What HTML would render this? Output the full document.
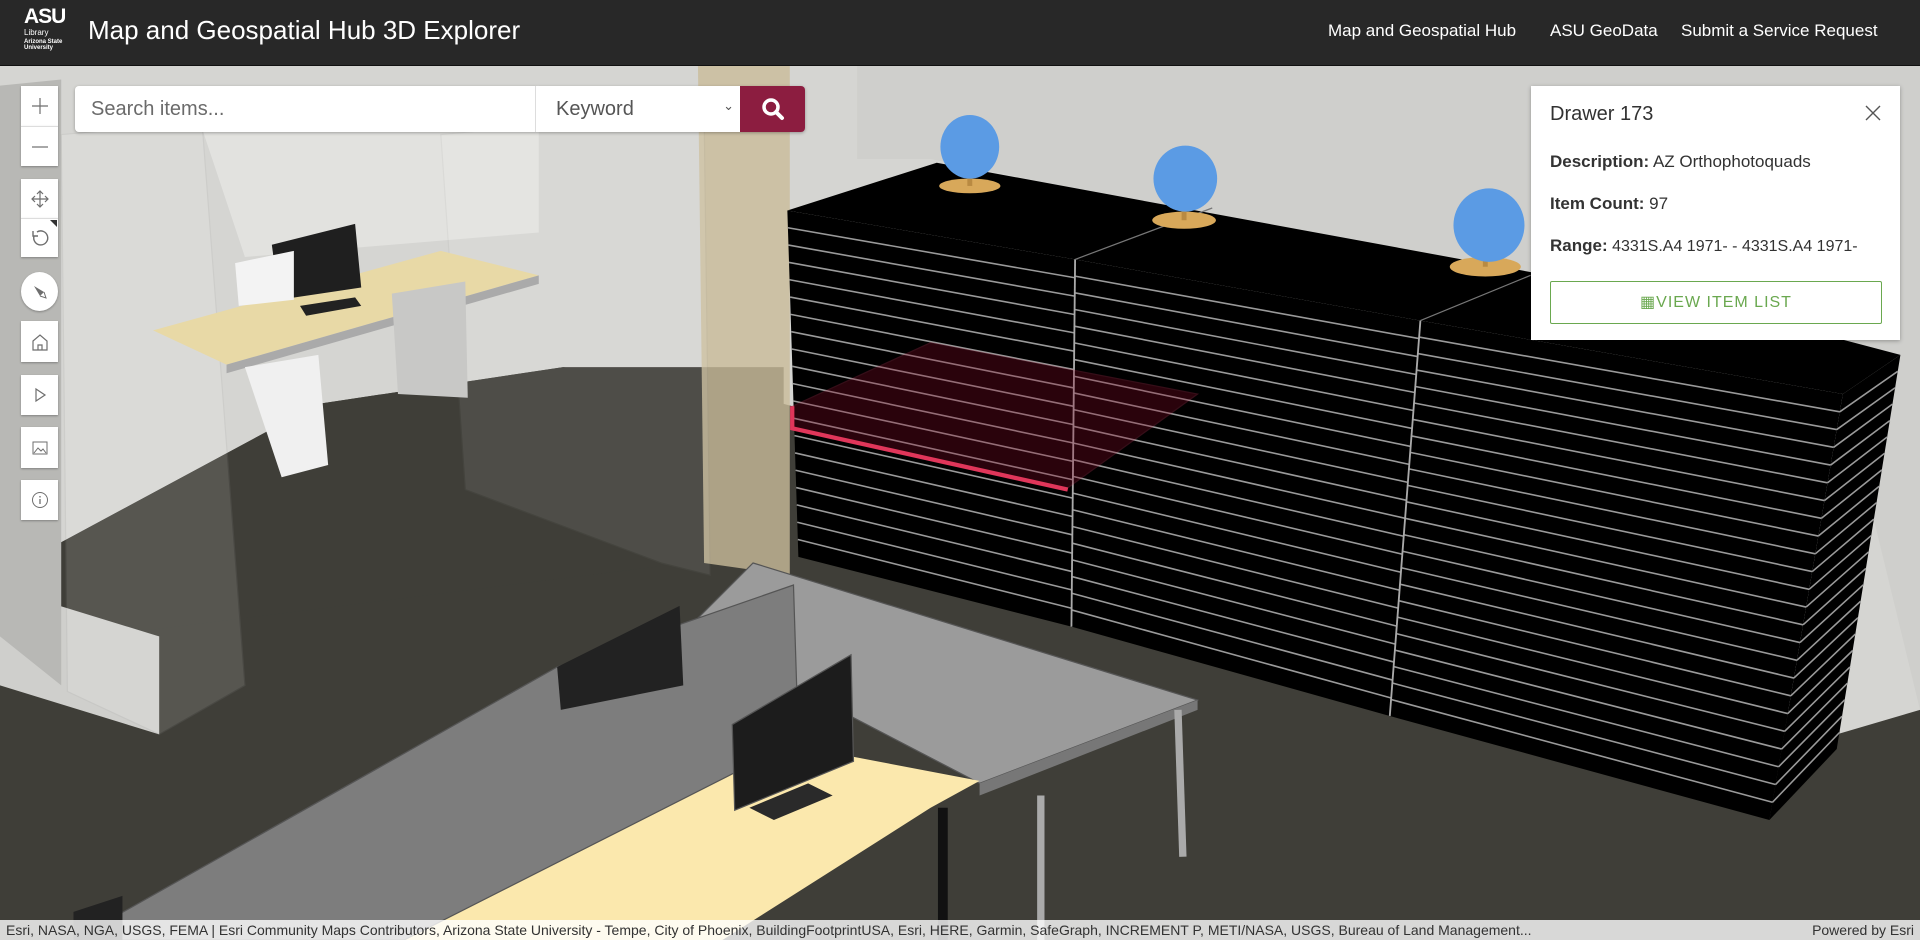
<!DOCTYPE html>
<html><head><meta charset="utf-8"><style>
*{margin:0;padding:0;box-sizing:border-box}
body{width:1920px;height:940px;overflow:hidden;position:relative;font-family:"Liberation Sans",sans-serif;background:#3e3d37}
#hdr{position:absolute;left:0;top:0;width:1920px;height:66px;background:#282828;border-bottom:1px solid #111;color:#fff}
#scene{position:absolute;left:0;top:66px;width:1920px;height:874px}
.tb{position:absolute;left:21px;width:37px;height:39px;background:#fff;display:flex;align-items:center;justify-content:center;color:#6e6e6e;box-shadow:0 1px 2px rgba(0,0,0,.3)}
.tb svg{width:20px;height:20px}
.pop{position:absolute;left:1531px;top:86px;width:369px;height:254px;background:#fff;box-shadow:0 1px 4px rgba(0,0,0,.3);color:#323232}
.pop p{position:absolute;left:19px;font-size:17px;white-space:nowrap}
.pop b{font-weight:bold;color:#333}
</style></head><body>
<svg id="scene" viewBox="0 54 1568 714" preserveAspectRatio="none" xmlns="http://www.w3.org/2000/svg">
<rect x="0" y="54" width="1568" height="714" fill="#3f3e38"/>
<polygon points="0,54 1568,54 1568,580 1500,600 1160,470 640,330 460,300 260,330 0,470" fill="#d5d5d2"/>
<polygon points="700,54 1568,54 1568,580 1505,320 1250,230 760,130 700,130" fill="#cfcfcc"/>
<polygon points="0,470 260,330 460,300 640,300 640,450 0,530" fill="#3f3e38"/>
<polygon points="0,480 130,520 130,600 0,560" fill="#cfcfcc"/>
<polygon points="0,70 50,65 50,560 0,520" fill="#b8b8b5"/>
<polygon points="160,90 440,70 440,190 200,210" fill="#e2e2df"/>
<polygon points="570,54 645,54 645,470 575,460" fill="#c9bc9a" opacity=".8"/>
<polygon points="50,110 165,100 200,560 130,600 55,565" fill="#ffffff" opacity=".12" stroke="#999" stroke-width="1"/>
<polygon points="360,110 575,90 580,470 540,460 380,400" fill="#ffffff" opacity=".08" stroke="#888"/>
<polygon points="125,270 360,205 440,225 185,298" fill="#e8d9a6"/>
<polygon points="185,298 440,225 440,232 185,305" fill="#aaa"/>
<polygon points="200,300 260,290 268,380 230,390" fill="#f0f0f0"/>
<polygon points="320,240 380,230 382,325 325,322" fill="#c8c8c6"/>
<polygon points="222,200 290,183 295,235 228,245" fill="#1f1f1f"/>
<polygon points="245,250 290,243 295,250 250,258" fill="#222"/>
<polygon points="192,215 240,205 240,245 195,250" fill="#f3f3f3"/>
<polygon points="643,172 765,133 1400,250 1552,290 1505,322 1160,262 878,212" fill="#000"/>
<polygon points="643,172 878,212 1160,262 1505,322 1445,670 1135,585 875,512 652,455" fill="#000"/>
<polygon points="1505,322 1552,290 1500,612 1445,670" fill="#000"/>
<g id="lines" stroke="#9a9a9a" stroke-width="1.3" fill="none"></g>
<line x1="878" y1="212" x2="875" y2="512" stroke="#aaa" stroke-width="1.5"/>
<line x1="1160" y1="262" x2="1135" y2="585" stroke="#aaa" stroke-width="1.5"/>
<line x1="878" y1="212" x2="990" y2="170" stroke="#777"/>
<line x1="1160" y1="262" x2="1250" y2="225" stroke="#777"/>
<polygon points="647,332 760,280 978,322 870,400 647,350" fill="#8a0a2a" opacity=".3" stroke="#b03050"/>
<polyline points="647,332 647,350 872,400" stroke="#e0365a" stroke-width="3.5" fill="none"/>
<g><ellipse cx="792" cy="152" rx="25" ry="6" fill="#d8a85a"/><rect x="790" y="138" width="4" height="14" fill="#b98a42"/><ellipse cx="792" cy="120" rx="24" ry="26" fill="#5b9be4"/></g>
<g><ellipse cx="967" cy="180" rx="26" ry="7" fill="#d8a85a"/><rect x="965" y="165" width="4" height="15" fill="#b98a42"/><ellipse cx="968" cy="146" rx="26" ry="27" fill="#5b9be4"/></g>
<g><ellipse cx="1213" cy="218" rx="29" ry="8" fill="#d8a85a"/><rect x="1211" y="205" width="4" height="13" fill="#b98a42"/><ellipse cx="1216" cy="184" rx="29" ry="30" fill="#5b9be4"/></g>
<polygon points="560,515 615,460 978,572 800,640" fill="#9b9b9b" stroke="#555"/>
<polygon points="800,640 978,572 978,580 800,650" fill="#777"/>
<line x1="962" y1="580" x2="966" y2="700" stroke="#aaa" stroke-width="6"/>
<line x1="850" y1="650" x2="850" y2="768" stroke="#aaa" stroke-width="6"/>
<line x1="770" y1="660" x2="770" y2="768" stroke="#111" stroke-width="8"/>
<polygon points="80,768 470,575 800,638 760,660 590,768" fill="#fbe8ad"/>
<polygon points="60,768 455,545 648,478 652,605 330,768" fill="#7d7d7d" stroke="#555"/>
<polygon points="455,545 555,495 558,560 458,580" fill="#222"/>
<polygon points="598,592 695,535 697,622 600,662" fill="#1c1c1c" stroke="#555"/>
<polygon points="612,660 660,640 680,650 632,670" fill="#2a2a2a"/>
<polygon points="60,745 100,732 100,768 60,768" fill="#222"/>
</svg>
<script>
(function(){var g=document.getElementById('lines');var s='';
function L(a,b,c,d,n){for(var i=1;i<n;i++){var t=i/n;var x1=a[0]+(c[0]-a[0])*t,y1=a[1]+(c[1]-a[1])*t,x2=b[0]+(d[0]-b[0])*t,y2=b[1]+(d[1]-b[1])*t;s+='<line x1="'+x1+'" y1="'+y1+'" x2="'+x2+'" y2="'+y2+'"/>';}}
L([643,172],[878,212],[652,455],[875,512],20);
L([878,212],[1160,262],[875,512],[1135,585],22);
L([1160,262],[1505,322],[1135,585],[1445,670],24);
L([1505,322],[1552,290],[1445,670],[1500,612],24);
g.innerHTML=s;})();
</script>
<div id="hdr">
 <div style="position:absolute;left:24px;top:6px;width:50px;color:#fff;line-height:1">
  <div style="font-weight:bold;font-size:21px;letter-spacing:-1px">ASU</div>
  <div style="font-size:8px;margin-top:2px">Library</div>
  <div style="font-size:6px;font-weight:bold;margin-top:2px">Arizona State<br>University</div>
 </div>
 <div style="position:absolute;left:88px;top:15px;font-size:26px;color:#fff">Map and Geospatial Hub 3D Explorer</div>
 <div style="position:absolute;left:1328px;top:21px;font-size:17px">Map and Geospatial Hub</div>
 <div style="position:absolute;left:1550px;top:21px;font-size:17px">ASU GeoData</div>
 <div style="position:absolute;left:1681px;top:21px;font-size:17px">Submit a Service Request</div>
</div>
<div class="tb" style="top:86px;height:40px"><svg viewBox="0 0 20 20"><path d="M10 2v16M2 10h16" stroke="#6e6e6e" stroke-width="1.2"/></svg></div>
<div class="tb" style="top:126px;height:40px;border-top:1px solid #ddd"><svg viewBox="0 0 20 20"><path d="M2 10h16" stroke="#6e6e6e" stroke-width="1.2"/></svg></div>
<div class="tb" style="top:179px;height:39px"><svg viewBox="0 0 20 20"><path d="M10 2v16M2 10h16M7 5l3-3 3 3M7 15l3 3 3-3M5 7l-3 3 3 3M15 7l3 3-3 3" stroke="#6e6e6e" fill="none" stroke-width="1.2"/></svg></div>
<div class="tb" style="top:218px;height:39px;border-top:1px solid #ddd"><svg viewBox="0 0 20 20"><path d="M4 8a7 7 0 1 0 3-4M3 3v5h5" stroke="#6e6e6e" fill="none" stroke-width="1.4"/></svg><div style="position:absolute;right:1px;top:1px;border-left:7px solid transparent;border-top:7px solid #333"></div></div>
<div class="tb" style="top:272px;height:39px;border-radius:50%"><svg viewBox="0 0 20 20"><path d="M4 4l10 6-4 4z" fill="#6e6e6e"/><path d="M10 14l6 2-2-6" fill="none" stroke="#6e6e6e"/></svg></div>
<div class="tb" style="top:321px;height:41px"><svg viewBox="0 0 20 20"><path d="M3 9l7-6 7 6v9H3z M8 18v-5h4v5" stroke="#6e6e6e" fill="none" stroke-width="1.2"/></svg></div>
<div class="tb" style="top:375px;height:40px"><svg viewBox="0 0 20 20"><path d="M6 4l9 6-9 6z" stroke="#6e6e6e" fill="none" stroke-width="1.2"/></svg></div>
<div class="tb" style="top:427px;height:41px"><svg viewBox="0 0 20 20"><rect x="3" y="4" width="14" height="12" stroke="#6e6e6e" fill="none"/><path d="M4 15l4-5 3 3 2-2 3 4" stroke="#6e6e6e" fill="none"/></svg></div>
<div class="tb" style="top:480px;height:40px"><svg viewBox="0 0 20 20"><circle cx="10" cy="10" r="7.5" stroke="#6e6e6e" fill="none"/><path d="M10 9v5M10 6v1.5" stroke="#6e6e6e" stroke-width="1.3"/></svg></div>
<div style="position:absolute;left:75px;top:86px;width:730px;height:46px;display:flex;box-shadow:0 1px 3px rgba(0,0,0,.3);border-radius:4px;overflow:hidden">
 <div style="width:460px;background:#fff;font-size:20px;color:#6b6b6b;padding:12px 16px">Search items...</div>
 <div style="width:205px;background:#fff;border-left:1px solid #ddd;font-size:20px;color:#555;padding:12px 20px;position:relative">Keyword<span style="position:absolute;right:6px;top:12px;font-size:13px">&#8964;</span></div>
 <div style="width:65px;background:#8c1d40;display:flex;align-items:center;justify-content:center"><svg width="24" height="24" viewBox="0 0 24 24"><circle cx="10" cy="10" r="7" stroke="#fff" stroke-width="3.5" fill="none"/><path d="M15 15l6 6" stroke="#fff" stroke-width="4" stroke-linecap="round"/></svg></div>
</div>
<div class="pop">
 <p style="top:17px;font-size:20px;color:#323232">Drawer 173</p>
 <svg style="position:absolute;right:18px;top:18px" width="18" height="18" viewBox="0 0 18 18"><path d="M2 2l14 14M16 2L2 16" stroke="#555" stroke-width="1.4"/></svg>
 <p style="top:66px"><b>Description:</b> AZ Orthophotoquads</p>
 <p style="top:108px"><b>Item Count:</b> 97</p>
 <p style="top:150px;font-size:16px"><b style="font-size:17px">Range:</b> 4331S.A4 1971- - 4331S.A4 1971-</p>
 <div style="position:absolute;left:19px;top:195px;width:332px;height:43px;border:1px solid #6aa84f;border-radius:2px;color:#6aa84f;font-size:16px;letter-spacing:1px;text-align:center;line-height:41px">&#9638;VIEW ITEM LIST</div>
</div>
<div style="position:absolute;left:0;top:920px;width:1920px;height:20px;background:rgba(255,255,255,.8);font-size:14px;color:#323232;line-height:20px;padding-left:6px;white-space:nowrap;overflow:hidden">Esri, NASA, NGA, USGS, FEMA | Esri Community Maps Contributors, Arizona State University - Tempe, City of Phoenix, BuildingFootprintUSA, Esri, HERE, Garmin, SafeGraph, INCREMENT P, METI/NASA, USGS, Bureau of Land Management...<span style="position:absolute;right:6px">Powered by Esri</span></div>
</body></html>
